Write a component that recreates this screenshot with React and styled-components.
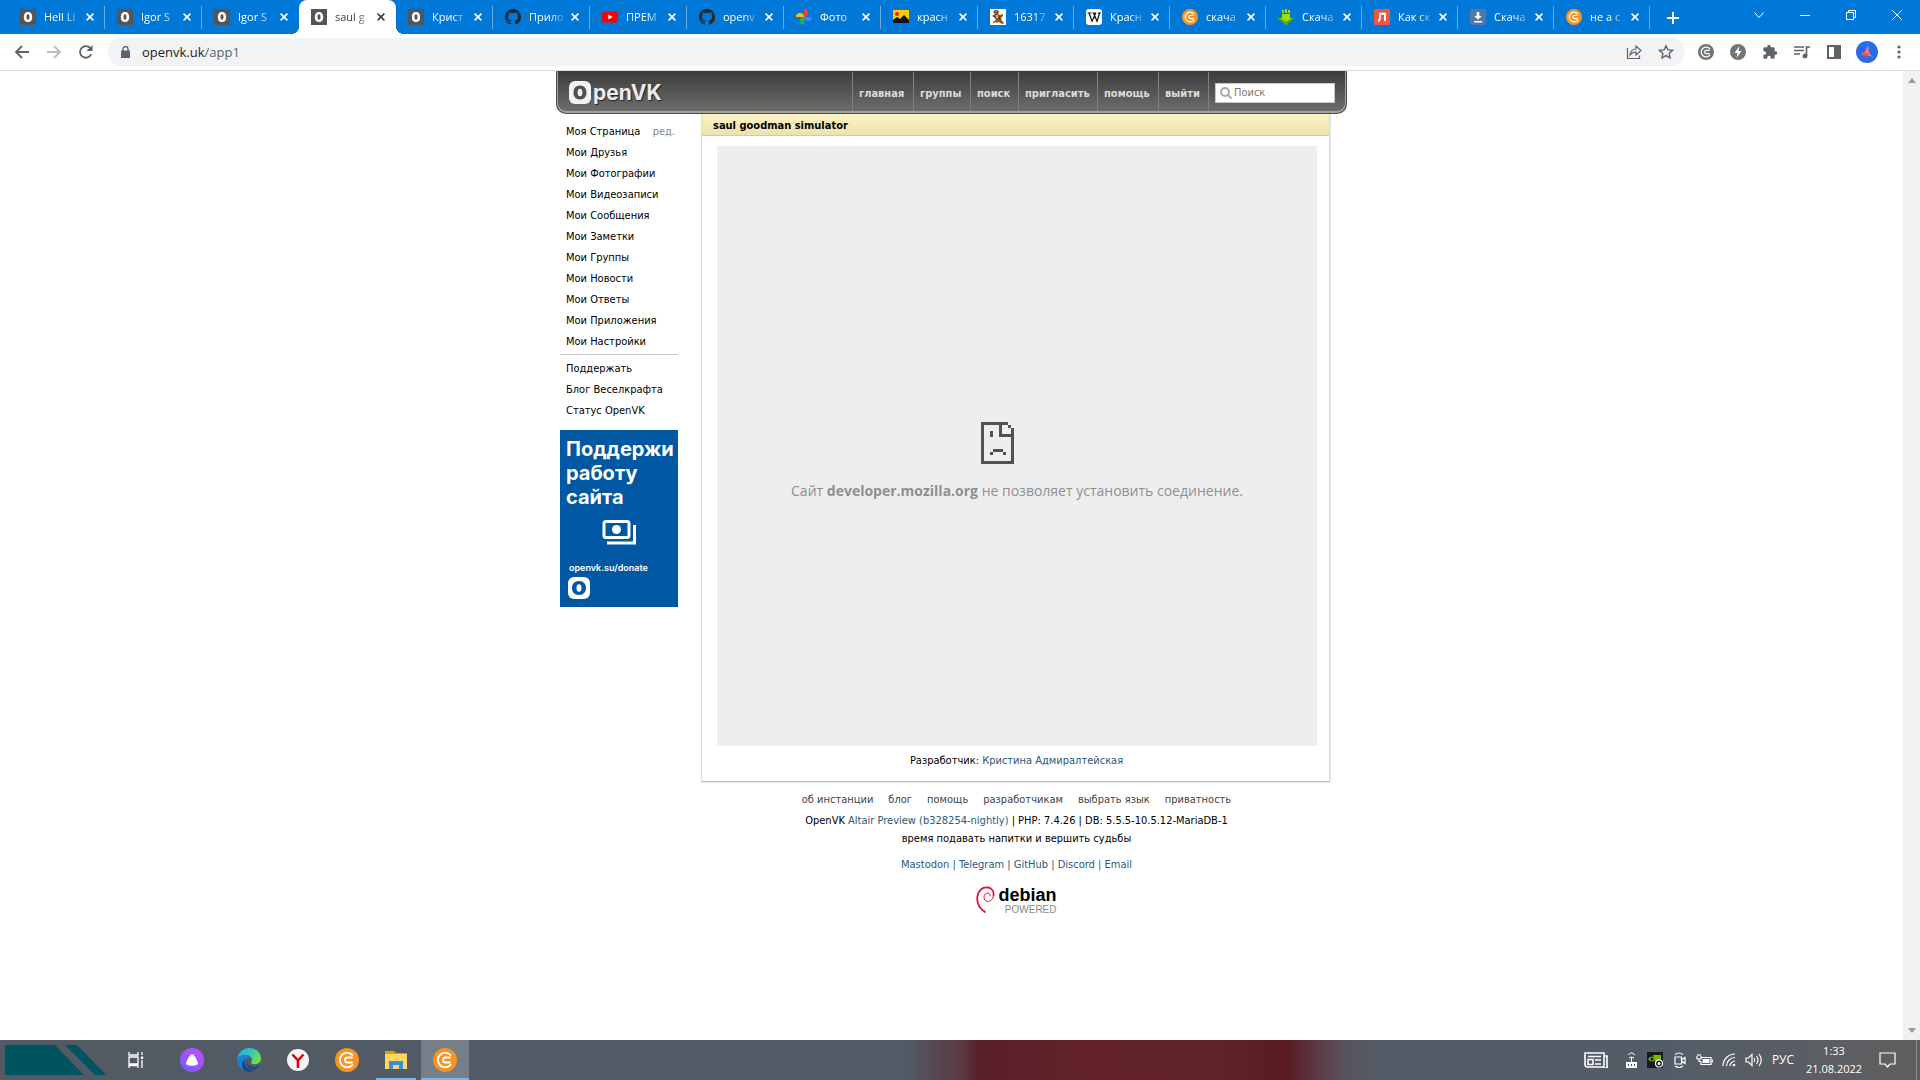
import React from "react";
import styled, { createGlobalStyle, css } from "styled-components";

const ui = '"Open Sans", "Noto Sans", sans-serif';
const tahoma = '"DejaVu Sans Condensed", "DejaVu Sans", sans-serif';

const GlobalStyle = createGlobalStyle`
  *, *::before, *::after { box-sizing: border-box; }
  html, body { margin: 0; background: #fff; }
  button { border: 0; padding: 0; margin: 0; background: none; font: inherit; color: inherit; }
  a { color: inherit; text-decoration: none; }
  ul { list-style: none; margin: 0; padding: 0; }
  svg { display: block; flex: none; }
`;

const Screen = styled.div`
  display: flex;
  flex-direction: column;
  min-height: 100vh;
  font-family: ${ui};
`;

/* ---------- browser chrome ---------- */

const TitleBar = styled.div`
  display: flex;
  height: 34px;
  padding-left: 8px;
  background: #0078d7;
  color: #fff;
`;

const TabStrip = styled.div`
  display: flex;
  flex: 1;
  min-width: 0;
`;

const Tab = styled.div`
  position: relative;
  display: flex;
  align-items: center;
  flex: 1 1 ${(p) => p.$basis}px;
  min-width: 0;
  height: 34px;
  padding: 0 10px 0 12px;
  font-size: 11px;
  line-height: 16px;
  border-right: 1px solid ${(p) => (p.$noLine ? "transparent" : "#66aee7")};
  border-image: ${(p) =>
    p.$noLine
      ? "none"
      : "linear-gradient(transparent 7px, #66aee7 7px, #66aee7 28px, transparent 28px) 1"};
  ${(p) =>
    p.$active &&
    css`
      background: #fff;
      color: #3c4043;
      border-radius: 8px 8px 0 0;
      &::before,
      &::after {
        content: "";
        position: absolute;
        bottom: 0;
        width: 8px;
        height: 8px;
      }
      &::before {
        left: -8px;
        background: radial-gradient(circle at 0 0, transparent 8px, #fff 8px);
      }
      &::after {
        right: -9px;
        background: radial-gradient(circle at 100% 0, transparent 8px, #fff 8px);
      }
    `}
`;

const TabTitle = styled.button`
  flex: 1;
  min-width: 0;
  margin: 0 4px 0 8px;
  white-space: nowrap;
  text-align: left;
  mask-image: linear-gradient(90deg, #000 55%, transparent 100%);
`;

const WindowControls = styled.div`
  display: flex;
  align-items: center;
  justify-content: space-between;
  width: 270px;
  padding: 0 18px 4px 17px;
`;

const WindowButtons = styled.div`
  display: flex;
  gap: 36px;
`;

const NewTab = styled.button`
  padding-top: 5px;
`;

const Toolbar = styled.div`
  display: flex;
  align-items: center;
  height: 37px;
  padding: 0 10px 1px 14px;
  border-bottom: 1px solid #d9dbde;
  background: #fff;
  color: #5f6368;
`;

const NavButtons = styled.div`
  display: flex;
  gap: 16px;
  width: 94px;
`;

const AddressBar = styled.div`
  display: flex;
  align-items: center;
  flex: 1;
  height: 28px;
  padding: 0 11px 0 13px;
  gap: 16px;
  border-radius: 14px;
  background: #f1f3f4;
`;

const AddressText = styled.a`
  flex: 1;
  margin-left: -4px;
  font-size: 13px;
  line-height: 20px;
  color: #5f6368;
  span {
    color: #202124;
  }
`;

const Extensions = styled.div`
  display: flex;
  align-items: center;
  gap: 16px;
  padding-left: 13px;
`;

const Profile = styled.button`
  margin-left: -2px;
`;

/* ---------- page ---------- */

const Viewport = styled.div`
  display: flex;
  flex: 1;
`;

const ScrollTrack = styled.div`
  display: flex;
  flex-direction: column;
  justify-content: space-between;
  align-items: center;
  width: 17px;
  padding: 7px 0;
  background: #f1f1f1;
`;

const Page = styled.div`
  flex: 1;
  font-family: ${tahoma};
  font-size: 11px;
  line-height: 14px;
  color: #000;
`;

const Layout = styled.div`
  width: 791px;
  margin: 0 auto;
`;

const SiteHeader = styled.header`
  display: flex;
  height: 43px;
  padding: 0 11px 0 12px;
  border: 1px solid #4a4a4a;
  border-top: 0;
  border-radius: 0 0 10px 10px;
  background: linear-gradient(#3b3b3b, #707070);
  box-shadow: inset 0 -1px 0 1px #a2a2a2;
`;

const Logo = styled.a`
  display: flex;
  align-items: center;
  flex: 1;
  gap: 2px;
  padding-top: 1px;
  font-family: Inter, sans-serif;
  font-size: 21px;
  line-height: 24px;
  font-weight: 700;
  color: #ececec;
  text-shadow: 1px 1px 1px #222;
`;

const SiteNav = styled.nav`
  display: flex;
  height: 40px;
  padding-top: 1px;
`;

const NavLink = styled.a`
  display: flex;
  align-items: center;
  width: ${(p) => p.$w}px;
  padding: 4px 0 0 6px;
  border-left: 1px solid #808080;
  font-size: 11px;
  font-weight: 700;
  color: #dcdcdc;
`;

const SearchCell = styled.form`
  display: flex;
  align-items: center;
  padding: 2px 0 0 6px;
  border-left: 1px solid #808080;
`;

const SearchBox = styled.label`
  display: flex;
  align-items: center;
  width: 120px;
  height: 20px;
  padding: 0 4px;
  gap: 2px;
  border: 1px solid #c0cad5;
  background: #fff;
`;

const SearchInput = styled.input`
  width: 94px;
  padding: 0;
  border: 0;
  outline: 0;
  background: none;
  font-family: ${tahoma};
  font-size: 11px;
  line-height: 14px;
  &::placeholder {
    color: #777;
    opacity: 1;
  }
`;

const Columns = styled.div`
  display: flex;
  gap: 22px;
  padding: 0 17px 0 4px;
`;

const Sidebar = styled.aside`
  width: 119px;
  padding: 7px 1px 0 0;
`;

const MenuItem = styled.li`
  display: flex;
  justify-content: space-between;
  height: 21px;
  padding: 4px 3px 0 6px;
  white-space: nowrap;
`;

const EditLink = styled.a`
  color: #888;
`;

const Divider = styled.hr`
  height: 1px;
  margin: 2px 0 3px;
  border: 0;
  background: #c6c8cc;
`;

const Banner = styled.a`
  display: flex;
  flex-direction: column;
  height: 177px;
  margin-top: 9px;
  padding: 7px 6px;
  background: #0058a3;
  font-family: Inter, sans-serif;
  color: #fff;
`;

const BannerTitle = styled.span`
  font-size: 20px;
  line-height: 24px;
  font-weight: 700;
`;

const BannerUrl = styled.span`
  padding: 0 3px;
  margin: 11px 0 3px;
  font-size: 9px;
  line-height: 12px;
  font-weight: 600;
`;

const Main = styled.main`
  display: flex;
  flex-direction: column;
  flex: 1;
`;

const Panel = styled.section`
  border: 1px solid #d5dde6;
  border-top: 0;
  border-bottom: 1px solid #b9c4d4;
  box-shadow: 1px 1px 1px #e4eaf1;
  text-align: center;
`;

const PanelTitle = styled.h1`
  height: 22px;
  margin: 0;
  padding: 5px 11px 0;
  border-bottom: 1px solid #d6cc94;
  background: linear-gradient(#fcf3c2, #ece2b0);
  font-size: 11px;
  line-height: 14px;
  font-weight: 700;
  text-align: left;
`;

const AppFrame = styled.div`
  display: flex;
  flex-direction: column;
  align-items: center;
  height: 600px;
  margin: 10px 12px 8px 15px;
  padding-top: 276px;
  background: #eee;
  font-family: ${ui};
  font-size: 14px;
  line-height: 20px;
  color: #8f8f8f;
`;

const FrameMessage = styled.p`
  margin: 17px 0 0;
`;

const Developer = styled.p`
  margin: 0 0 13px;
  padding-left: 2px;
`;

const Blue = styled.a`
  color: #2b587a;
`;

const Footer = styled.footer`
  display: flex;
  flex-direction: column;
  align-items: center;
  padding: 11px 0 0 2px;
`;

const FooterLinks = styled.nav`
  display: flex;
  gap: 15px;
  margin-bottom: 7px;
  color: #444;
`;

const FooterLine = styled.p`
  margin: 0 0 ${(p) => p.$after}px;
  color: ${(p) => (p.$blue ? "#2b587a" : "#000")};
`;

const Debian = styled.a`
  display: flex;
  gap: 3px;
`;

const DebianWords = styled.span`
  display: flex;
  flex-direction: column;
  align-items: flex-end;
`;

const DebianName = styled.span`
  font-family: "Liberation Sans", sans-serif;
  font-size: 18px;
  line-height: 19px;
  font-weight: 700;
`;

const DebianPowered = styled.span`
  font-family: "Liberation Sans", sans-serif;
  font-size: 10px;
  line-height: 10px;
  color: #8a8a8a;
`;

/* ---------- taskbar ---------- */

const Taskbar = styled.footer`
  display: flex;
  justify-content: space-between;
  height: 40px;
  background: linear-gradient(
    90deg,
    #525a64 0,
    #525b66 47%,
    #5c3a44 50%,
    #5a1f27 51%,
    #64232b 57%,
    #63232a 63%,
    #581b22 67%,
    #5b2f38 68%,
    #59535d 70%,
    #525c66 72%,
    #535c68 86%,
    #605f5f 100%
  );
  color: #fff;
`;

const TaskGroup = styled.div`
  display: flex;
  align-items: center;
`;

const TaskButton = styled.button`
  display: flex;
  align-items: center;
  justify-content: center;
  width: ${(p) => p.$w}px;
  height: 40px;
  margin-left: ${(p) => (p.$active ? "5px" : 0)};
  background: ${(p) => (p.$active ? "#767e87" : "none")};
  box-shadow: ${(p) => (p.$open ? "inset 0 -2px 0 #76b9ed" : "none")};
`;

const StartButton = styled.button`
  width: 108px;
  padding-left: 5px;
`;

const Tray = styled.div`
  display: flex;
  align-items: center;
  gap: 9px;
  padding-right: 3px;
`;

const TrayText = styled.span`
  width: 24px;
  font-size: 12px;
  line-height: 18px;
  text-align: center;
`;

const Clock = styled.time`
  width: 60px;
  font-size: 11px;
  line-height: 18px;
  text-align: center;
`;

const News = styled.span`
  padding-right: 8px;
`;

const Notice = styled.button`
  padding: 0 20px 0 5px;
  border-right: 1px solid #8b8b8b;
  height: 40px;
`;

/* ---------- icons ---------- */

const OvkIcon = () => (
  <svg width="16" height="16" viewBox="0 0 16 16">
    <rect width="16" height="16" fill="#555" />
    <path fill="#fff" fillRule="evenodd" d="M8 3c2.900 0 4.200 2 4.200 5S10.900 13 8 13s-4.200-2-4.200-5S5.100 3 8 3zm0 2.200C6.800 5.200 6.500 6.400 6.500 8S6.800 10.800 8 10.800 9.500 9.600 9.500 8 9.200 5.200 8 5.200z" />
  </svg>
);
const GithubIcon = () => (
  <svg width="16" height="16" viewBox="0 0 16 16" fill="#24292f">
    <path d="M8 0C3.580 0 0 3.580 0 8c0 3.540 2.290 6.530 5.470 7.590.4.070.55-.17.55-.38 0-.19-.01-.82-.01-1.490-2.010.37-2.530-.49-2.690-.94-.09-.23-.48-.94-.82-1.130-.28-.15-.68-.52-.01-.53.63-.01 1.080.58 1.230.82.72 1.210 1.870.87 2.330.66.07-.52.28-.87.51-1.070-1.780-.2-3.640-.89-3.640-3.950 0-.87.31-1.590.82-2.150-.08-.2-.36-1.020.08-2.120 0 0 .67-.21 2.200.82a7.600 7.600 0 0 1 4 0c1.530-1.040 2.200-.82 2.200-.82.44 1.100.16 1.920.08 2.120.51.56.82 1.270.82 2.150 0 3.070-1.870 3.750-3.650 3.950.29.25.54.73.54 1.480 0 1.070-.01 1.930-.01 2.200 0 .21.15.46.55.38A8 8 0 0 0 16 8c0-4.420-3.580-8-8-8z" />
  </svg>
);
const YoutubeIcon = () => (
  <svg width="16" height="16" viewBox="0 0 16 16">
    <rect y="2.500" width="16" height="11" rx="2.500" fill="#f00" />
    <path d="M6.300 5.500v5L10.600 8z" fill="#fff" />
  </svg>
);
const PhotosIcon = () => (
  <svg width="16" height="16" viewBox="0 0 16 16">
    <path d="M8 0a4 4 0 0 1 0 8z" fill="#ea4335" />
    <path d="M0 8a4 4 0 0 1 8 0z" fill="#fbbc04" />
    <path d="M16 8a4 4 0 0 1-8 0z" fill="#4285f4" />
    <path d="M8 16a4 4 0 0 1 0-8z" fill="#34a853" />
  </svg>
);
const PictureIcon = () => (
  <svg width="16" height="16" viewBox="0 0 16 16">
    <path d="M0 1h16v13H0z" fill="#fc0" />
    <circle cx="4" cy="5" r="2" fill="#e22" />
    <path d="M0 14v-3l4-3 3 2 4-4 5 5v3z" fill="#111" />
  </svg>
);
const BeaverIcon = () => (
  <svg width="16" height="16" viewBox="0 0 16 16">
    <path d="M0 0h16v16H0z" fill="#fff" />
    <path d="M5 1h3l1 2-1 2 2 1 3-1v2l-2 2 1 3 2 2-1 1-3-1-1-1-3 1H3v-1l3-2-2-3-2-1 3-2-2-2z" fill="#8a5424" />
    <path d="M6 2h1v1H6zM6 6h2v3H6zM4 13h3v1H4z" fill="#e3b368" />
    <path d="M7 3h1v1H7zM9 8h1v2H9zM4 7h1v1H4z" fill="#3b220f" />
  </svg>
);
const WikiIcon = () => (
  <svg width="16" height="16" viewBox="0 0 16 16">
    <rect width="16" height="16" rx="3" fill="#fff" />
    <path d="M1.500 4h4M6.500 4h3.500M11.500 4H15M3 4l3 8.200L9.800 4M7.500 4l3.500 8.200L13.700 4" fill="none" stroke="#111" strokeWidth="1.200" />
  </svg>
);
const CIcon = ({ size = 16, color = "#f7931e" }) => (
  <svg width={size} height={size} viewBox="0 0 24 24">
    <circle cx="12" cy="12" r="12" fill={color} />
    <path d="M17.500 7A7.300 7.300 0 1 0 17.500 17M17 9.500H12.500a2.500 2.500 0 0 0 0 5H17" fill="none" stroke="#fff" strokeWidth="1.900" strokeLinecap="round" />
  </svg>
);
const GreenDownIcon = () => (
  <svg width="16" height="16" viewBox="0 0 16 16">
    <path d="M4 5h8v4h4l-8 7-8-7h4zM4 1h2v3H4zM7 0h2v4H7zM10 1h2v3h-2z" fill="#9be000" />
    <path d="M0 9l8 7 8-7h-2l-6 4-6-4z" fill="#5aa800" />
  </svg>
);
const LIcon = () => (
  <svg width="16" height="16" viewBox="0 0 16 16">
    <rect width="16" height="16" rx="1.500" fill="#f0563f" />
    <path d="M4 11.800c1.700 0 2-1.500 2-3.300V4.700h5V12" fill="none" stroke="#fff" strokeWidth="1.900" />
  </svg>
);
const SaveIcon = () => (
  <svg width="16" height="16" viewBox="0 0 16 16">
    <rect width="16" height="16" rx="2" fill="#5478a6" />
    <path d="M6.700 3h2.600v4h2.500L8 10.800 4.200 7h2.500zM4 12h8v1.500H4z" fill="#fff" />
  </svg>
);
const CloseIcon = () => (
  <svg width="8" height="8" viewBox="0 0 8 8">
    <path d="M.6.6l6.800 6.800M7.400.6L.6 7.400" stroke="currentColor" strokeWidth="1.600" />
  </svg>
);
const Stroke = ({ w = 16, h = 16, sw = 2, d, fill = "none", children }) => (
  <svg width={w} height={h} viewBox={`0 0 ${w} ${h}`} fill={fill} stroke="currentColor" strokeWidth={sw}>
    <path d={d} />
    {children}
  </svg>
);
const EdgeIcon = () => (
  <svg width="24" height="24" viewBox="0 0 24 24">
    <defs>
      <linearGradient id="edgeTop" x1="0" y1="0" x2="1" y2=".5">
        <stop offset="0" stopColor="#2aa7e0" />
        <stop offset=".5" stopColor="#2fc3c9" />
        <stop offset="1" stopColor="#6be04b" />
      </linearGradient>
    </defs>
    <path d="M.2 11C1 4.500 6 0 12.200 0 19 0 24 4.800 24 10.500c0 3.600-2.700 5.700-5.800 5.700-2.700 0-4.200-.9-4.200-1.800 0-.6.900-1 .9-2.700C14.900 9 12 7 8.500 7 4.500 7 1.400 8.600.2 11z" fill="url(#edgeTop)" />
    <path d="M0 12.500C.3 9 4 7 8.200 7c3 0 5.300 1.200 6.200 3-4-1.500-6.600 1-6.600 4.500 0 4.700 4.200 8.500 9 7.600A12 12 0 0 1 0 12.500z" fill="#1a80d2" />
    <path d="M8.200 11.500C6 17 11 22.500 17 21.900c-2 1.400-4 2.100-6 2.100-3.500-1-6-4-6-7.300 0-2.200 1.300-4.200 3.200-5.200zM10 13c-.5 4.500 5 8 12.500 4.500a12 12 0 0 1-4 4C13.500 23 9 18.500 10 13z" fill="#114a8b" />
  </svg>
);
const FolderIcon = () => (
  <svg width="22" height="20" viewBox="0 0 22 20">
    <path d="M0 1h9l2 2h11v4H0z" fill="#d9a406" />
    <path d="M0 4h22v15H0z" fill="#ffd75e" />
    <path d="M4 11h14v8h-4v-4H8v4H4z" fill="#3a8fdc" />
  </svg>
);
const OvkMark = ({ hole }) => (
  <svg width="22" height="23" viewBox="0 0 22 23">
    <rect width="22" height="23" rx="6" fill="#f2f2f2" />
    <path fill={hole} fillRule="evenodd" d="M11 4.500c4.300 0 6.500 3 6.500 7s-2.200 7-6.500 7-6.500-3-6.500-7 2.200-7 6.500-7zm0 3.200c-1.800 0-2.400 1.700-2.400 3.800s.6 3.800 2.400 3.800 2.400-1.700 2.400-3.800-.6-3.800-2.400-3.800z" />
  </svg>
);

const tabs = [
  ["Hell Li", OvkIcon],
  ["Igor S", OvkIcon],
  ["Igor S", OvkIcon],
  ["saul g", OvkIcon],
  ["Крист", OvkIcon],
  ["Прило", GithubIcon],
  ["ПРЕМ", YoutubeIcon],
  ["openv", GithubIcon],
  ["Фото", PhotosIcon],
  ["красн", PictureIcon],
  ["16317", BeaverIcon],
  ["Красн", WikiIcon],
  ["скача", CIcon],
  ["Скача", GreenDownIcon],
  ["Как ск", LIcon],
  ["Скача", SaveIcon],
  ["не а с", CIcon],
];

const siteNav = [
  ["главная", 61],
  ["группы", 57],
  ["поиск", 48],
  ["пригласить", 79],
  ["помощь", 61],
  ["выйти", 50],
];

const menu = [
  "Мои Друзья", "Мои Фотографии", "Мои Видеозаписи", "Мои Сообщения", "Мои Заметки",
  "Мои Группы", "Мои Новости", "Мои Ответы", "Мои Приложения", "Мои Настройки",
];
const extraMenu = ["Поддержать", "Блог Веселкрафта", "Статус OpenVK"];
const footerLinks = ["об инстанции", "блог", "помощь", "разработчикам", "выбрать язык", "приватность"];
const social = ["Mastodon", "Telegram", "GitHub", "Discord", "Email"];

function Browser() {
  return (
    <>
      <TitleBar>
        <TabStrip>
          {tabs.map(([title, Icon], i) => (
            <Tab key={i} $basis={i < 10 ? 97 : 96} $active={i === 3} $noLine={i === 2 || i === 3}>
              <Icon />
              <TabTitle>{title}</TabTitle>
              <button aria-label="Закрыть"><CloseIcon /></button>
            </Tab>
          ))}
        </TabStrip>
        <WindowControls>
          <NewTab aria-label="Новая вкладка"><Stroke w={12} h={12} sw={2} d="M6 0v12M0 6h12" /></NewTab>
          <WindowButtons>
            <button aria-label="Поиск вкладок"><Stroke w={10} h={10} sw={1} d="M.5 2.500L5 7.500l4.500-5" /></button>
            <button aria-label="Свернуть"><Stroke w={10} h={10} sw={1} d="M0 5.500h10" /></button>
            <button aria-label="Развернуть"><Stroke w={10} h={10} sw={1} d="M.5 2.500h7v7h-7zM2.500 2.500v-2h7v7h-2" /></button>
            <button aria-label="Закрыть окно"><Stroke w={10} h={10} sw={1} d="M.3.3l9.400 9.400M9.700.3L.3 9.700" /></button>
          </WindowButtons>
        </WindowControls>
      </TitleBar>
      <Toolbar>
        <NavButtons>
          <button aria-label="Назад"><Stroke sw={1.8} d="M15 8H2.200M8 2L2 8l6 6" /></button>
          <button aria-label="Вперёд" disabled><svg width="16" height="16" viewBox="0 0 16 16" fill="none" stroke="#babcbe" strokeWidth="1.800"><path d="M1 8h12.800M8 2l6 6-6 6" /></svg></button>
          <button aria-label="Обновить">
            <Stroke sw={1.8} d="M13.200 10.200A5.800 5.800 0 1 1 12.300 4.200L14 6"><path d="M14.500 1v6h-6z" fill="currentColor" stroke="none" /></Stroke>
          </button>
        </NavButtons>
        <AddressBar>
          <svg width="9" height="12" viewBox="0 0 9 12" fill="#5f6368"><path d="M0 4.500h9V12H0z" /><path d="M2 5V3a2.500 2.500 0 0 1 5 0v2" fill="none" stroke="#5f6368" strokeWidth="1.300" /></svg>
          <AddressText href="#"><span>openvk.uk</span>/app1</AddressText>
          <button aria-label="Поделиться"><Stroke sw={1.2} d="M1.500 4v10.500h12v-3M4 11c.5-4 3-6 6-6V2l5 4.500L10 11V8c-3 0-4.500 1-6 3z" /></button>
          <button aria-label="В закладки"><Stroke sw={1.4} d="M8 1.800l1.900 4.100 4.500.5-3.300 3 .9 4.400L8 11.600l-4 2.200.9-4.400-3.300-3 4.500-.5z" /></button>
        </AddressBar>
        <Extensions>
          <button aria-label="Криптобраузер"><CIcon color="#757575" /></button>
          <button aria-label="Ускоритель">
            <svg width="16" height="16" viewBox="0 0 16 16"><circle cx="8" cy="8" r="8" fill="#757575" /><path d="M9.500 2L4.500 9h3l-1 5 5-7h-3z" fill="#fff" /></svg>
          </button>
          <button aria-label="Расширения">
            <svg width="16" height="16" viewBox="0 0 24 24" fill="#5f6368"><path d="M20.500 11H19V7a2 2 0 0 0-2-2h-4V3.500a2.500 2.500 0 0 0-5 0V5H4a2 2 0 0 0-2 2v3.800h1.500a2.700 2.700 0 0 1 0 5.400H2V20a2 2 0 0 0 2 2h3.800v-1.500a2.700 2.700 0 0 1 5.400 0V22H17a2 2 0 0 0 2-2v-4h1.500a2.500 2.500 0 0 0 0-5z" /></svg>
          </button>
          <button aria-label="Медиа"><Stroke sw={1.7} d="M0 3h10M0 6.500h10M0 10h6M12.500 12V3H16"><circle cx="11" cy="12" r="1.600" fill="currentColor" /></Stroke></button>
          <button aria-label="Боковая панель"><Stroke sw={2} d="M2 2h12v12H2z"><path d="M9 2h5v12H9z" fill="currentColor" /></Stroke></button>
          <Profile aria-label="Профиль">
            <svg width="22" height="22" viewBox="0 0 22 22"><circle cx="11" cy="11" r="11" fill="#2b6be8" /><path d="M12 4l1 8 4 4-4.500-1.500-2 1L5 13l4-2z" fill="#ff7b78" /><path d="M5 13l6-1 2 2-3 2z" fill="#e8504f" /></svg>
          </Profile>
          <button aria-label="Меню"><svg width="16" height="16" viewBox="0 0 16 16" fill="#5f6368"><circle cx="5" cy="3" r="1.600" /><circle cx="5" cy="8" r="1.600" /><circle cx="5" cy="13" r="1.600" /></svg></button>
        </Extensions>
      </Toolbar>
    </>
  );
}

function Site() {
  return (
    <Page>
      <Layout>
        <SiteHeader>
          <Logo href="#" aria-label="OpenVK"><OvkMark hole="#505050" />penVK</Logo>
          <SiteNav>
            {siteNav.map(([t, w]) => <NavLink href="#" key={t} $w={w}>{t}</NavLink>)}
            <SearchCell>
              <SearchBox>
                <svg width="12" height="12" viewBox="0 0 12 12" fill="none" stroke="#aaa" strokeWidth="2"><circle cx="5" cy="5" r="4" /><path d="M8 8l3.500 3.500" /></svg>
                <SearchInput placeholder="Поиск" aria-label="Поиск" />
              </SearchBox>
            </SearchCell>
          </SiteNav>
        </SiteHeader>
        <Columns>
          <Sidebar>
            <ul>
              <MenuItem><a href="#">Моя Страница</a><EditLink href="#">ред.</EditLink></MenuItem>
              {menu.map((t) => <MenuItem key={t}><a href="#">{t}</a></MenuItem>)}
            </ul>
            <Divider />
            <ul>{extraMenu.map((t) => <MenuItem key={t}><a href="#">{t}</a></MenuItem>)}</ul>
            <Banner href="#">
              <BannerTitle>Поддержи работу сайта</BannerTitle>
              <svg width="106" height="42" viewBox="0 0 106 42" fill="none" stroke="#fff" strokeWidth="3">
                <rect x="38" y="12.500" width="25" height="16" rx="2" />
                <circle cx="50.500" cy="20.500" r="4.500" fill="#fff" stroke="none" />
                <path d="M41 34h27.500V16" />
              </svg>
              <BannerUrl>openvk.su/donate</BannerUrl>
              <svg width="24" height="22" viewBox="-2 0 24 22">
                <rect width="22" height="22" rx="6" fill="#fff" />
                <path fill="#0058a3" fillRule="evenodd" d="M11 4c4.500 0 7 3 7 7s-2.500 7-7 7-7-3-7-7 2.500-7 7-7zm0 3.200c-1.800 0-2.500 1.700-2.500 3.800s.7 3.800 2.500 3.800 2.500-1.700 2.500-3.800-.7-3.800-2.500-3.800z" />
              </svg>
            </Banner>
          </Sidebar>
          <Main>
            <Panel>
              <PanelTitle>saul goodman simulator</PanelTitle>
              <AppFrame>
                <svg width="72" height="42" viewBox="0 0 72 42" fill="#525252">
                  <path d="M0 0h27v3H3v36h27V15H18V3h3v9h9V6h3v36H0zM27 3h3v3h-3zM9 9h3v6H9zM12 27h10v3H12zM9 30h3v3H9zM22 30h3v3h-3z" />
                </svg>
                <FrameMessage>Сайт <b>developer.mozilla.org</b> не позволяет установить соединение.</FrameMessage>
              </AppFrame>
              <Developer>Разработчик: <Blue href="#">Кристина Адмиралтейская</Blue></Developer>
            </Panel>
            <Footer>
              <FooterLinks>{footerLinks.map((t) => <a href="#" key={t}>{t}</a>)}</FooterLinks>
              <FooterLine $after={4}>OpenVK <Blue href="#">Altair Preview (b328254-nightly)</Blue> | PHP: 7.4.26 | DB: 5.5.5-10.5.12-MariaDB-1</FooterLine>
              <FooterLine $after={12}>время подавать напитки и вершить судьбы</FooterLine>
              <FooterLine $after={14} $blue>
                {social.map((t, i) => <React.Fragment key={t}>{i > 0 && " | "}<a href="#">{t}</a></React.Fragment>)}
              </FooterLine>
              <Debian href="#">
                <svg width="19" height="27" viewBox="0 0 19 27" fill="none" stroke="#e0103f" strokeLinecap="round">
                  <path d="M9 26C3 22 .5 16 1.500 10 3 4 7 1 12 1.500c4 .5 6 4 5.500 8" strokeWidth="1.800" />
                  <path d="M17.500 9.500c-.5 5-4.500 7-7.500 5.500C7 13 7.500 7.500 11.500 7c2 0 3 1.500 2.500 3" strokeWidth="1" />
                </svg>
                <DebianWords><DebianName>debian</DebianName><DebianPowered>POWERED</DebianPowered></DebianWords>
              </Debian>
            </Footer>
          </Main>
        </Columns>
      </Layout>
    </Page>
  );
}

function WindowsTaskbar() {
  return (
    <Taskbar>
      <TaskGroup>
        <StartButton aria-label="Пуск">
          <svg width="102" height="30" viewBox="0 0 102 30" fill="#005360"><path d="M0 0h50l29 30H0zM60 0h12l29 30H90z" /></svg>
        </StartButton>
        <TaskButton $w={56} aria-label="Представление задач"><Stroke sw={1.3} d="M1 0v3h9V0M1 5h9v7H1zM1 16v-2.500h9V16M14 0v3M14 8v8"><path d="M12.800 4.500h2.400v2.500h-2.400z" fill="currentColor" stroke="none" /></Stroke></TaskButton>
        <TaskButton $w={56} aria-label="Алиса">
          <svg width="24" height="24" viewBox="0 0 24 24">
            <defs><linearGradient id="alice" x1="1" y1="0" x2="0" y2="1"><stop offset="0" stopColor="#c94cff" /><stop offset="1" stopColor="#6b5cff" /></linearGradient></defs>
            <circle cx="12" cy="12" r="12" fill="url(#alice)" /><path d="M12 6c2 0 6 7.500 6 9.500 0 3-12 3-12 0C6 13.500 10 6 12 6z" fill="#fff" />
          </svg>
        </TaskButton>
        <TaskButton $w={58} aria-label="Edge"><EdgeIcon /></TaskButton>
        <TaskButton $w={40} aria-label="Яндекс">
          <svg width="22" height="22" viewBox="0 0 22 22"><circle cx="11" cy="11" r="11" fill="#f4f4f4" /><path d="M5.500 5.500L11 11.500l5.500-6M11 11v8" fill="none" stroke="#e0000c" strokeWidth="2.500" /></svg>
        </TaskButton>
        <TaskButton $w={58} aria-label="CryptoTab"><CIcon size={24} /></TaskButton>
        <TaskButton $w={40} $open aria-label="Проводник"><FolderIcon /></TaskButton>
        <TaskButton $w={48} $open $active aria-label="CryptoTab, активное окно"><CIcon size={24} /></TaskButton>
      </TaskGroup>
      <Tray>
        <News><Stroke w={24} h={16} sw={1.6} d="M1 1h19v14H3.500A2.500 2.500 0 0 1 1 12.500zM20 4h3v9a2 2 0 0 1-4 2M4 4.500h13M4 7.500h5v5H4zM11 8h6M11 12h6" /></News>
        <svg width="13" height="16" viewBox="0 0 13 16" fill="#fff"><path d="M1 10h11v6H1zM6 5h1v5H6z" /><path d="M3 3q3.500-4 7 0M4 6q2.500-2 5 0" fill="none" stroke="#fff" /><path d="M3 12h1v2H3zM6 12h1v2H6zM9 12h1v2H9z" fill="#555" /></svg>
        <svg width="17" height="16" viewBox="0 0 17 16"><path d="M0 0h16v16H0z" fill="#1a1a1a" /><path d="M6 3h8v8H9zM1 7q4-5 8 0-4 5-8 0z" fill="#76b900" /><circle cx="5" cy="7" r="1.500" fill="#1a1a1a" /><circle cx="12" cy="11.500" r="3.500" fill="#1a1a1a" stroke="#fff" strokeWidth="1.200" /><circle cx="12" cy="11.500" r="1.500" fill="#fff" /></svg>
        <Stroke w={14} h={16} sw={1.2} d="M2 5h6.500v7H2zM8.500 8L12 5.500v6L8.500 9M2 2.500q4-3 8 0M2 14q4 3 8 0" />
        <svg width="17" height="12" viewBox="0 0 17 12" fill="none" stroke="#fff" strokeWidth="1.200"><path d="M5 3.500h10v7H5v-3M1 2v3h4V2M2 0v2M4 0v2M3 5v2.500h2" /><path d="M6.500 5h7v4h-7z" fill="#fff" stroke="none" /><path d="M16.300 5.500v3" /></svg>
        <Stroke w={14} h={14} sw={1.2} d="M1 13A12 12 0 0 1 13 1M4.500 13A8.500 8.500 0 0 1 13 4.500M8 13a5 5 0 0 1 5-5"><circle cx="12" cy="12" r="1.300" fill="#fff" stroke="none" /></Stroke>
        <Stroke w={17} h={14} sw={1.2} d="M1 5h2.500L7 1.500v11L3.500 9H1zM9 5q1.500 2 0 4M11.500 3q3 4 0 8M14 1q4.500 6 0 12" />
        <TrayText>РУС</TrayText>
        <Clock>1:33<br />21.08.2022</Clock>
        <Notice aria-label="Уведомления"><Stroke w={18} h={16} sw={1.2} d="M2 1h15v11h-5l-2.500 3L7 12H2z" /></Notice>
      </Tray>
    </Taskbar>
  );
}

export default function App() {
  return (
    <Screen>
      <GlobalStyle />
      <Browser />
      <Viewport>
        <Site />
        <ScrollTrack aria-hidden="true">
          <svg width="8" height="5" viewBox="0 0 8 5" fill="#9b9b9b"><path d="M0 5l4-5 4 5z" /></svg>
          <svg width="8" height="5" viewBox="0 0 8 5" fill="#9b9b9b"><path d="M0 0l4 5 4-5z" /></svg>
        </ScrollTrack>
      </Viewport>
      <WindowsTaskbar />
    </Screen>
  );
}
